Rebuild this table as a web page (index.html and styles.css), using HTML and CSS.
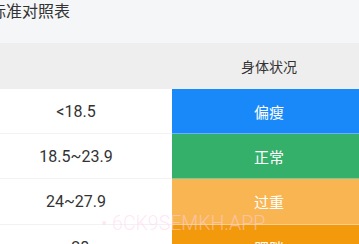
FILE: index.html
```html
<!DOCTYPE html>
<html lang="zh">
<head>
<meta charset="utf-8">
<link rel="stylesheet" href="styles.css">
</head>
<body>
<div class="page">
  <h1 class="title">标准对照表</h1>
  <div class="table">
    <div class="cell head"></div>
    <div class="cell head">身体状况</div>
    <div class="cell val">&lt;18.5</div>
    <div class="cell tag blue">偏瘦</div>
    <div class="cell val">18.5~23.9</div>
    <div class="cell tag green">正常</div>
    <div class="cell val">24~27.9</div>
    <div class="cell tag orange">过重</div>
    <div class="cell val">≥28</div>
    <div class="cell tag dark">肥胖</div>
  </div>
  <div class="watermark">• 6CK9SEMKH.APP</div>
</div>
</body>
</html>
```
FILE: styles.css
```css
html, body {
  margin: 0;
  padding: 0;
  background: #f5f6f8;
  overflow: hidden;
}
.page {
  position: relative;
  width: 359px;
  height: 244px;
  overflow: hidden;
  font-family: Roboto, "Noto Sans CJK SC", sans-serif;
}
.title {
  margin: 0 0 0 -10px;
  height: 43px;
  font-size: 16px;
  font-weight: 400;
  line-height: 21px;
  color: #333;
  font-family: "Noto Sans CJK SC", sans-serif;
}
.table {
  display: grid;
  grid-template-columns: 192px 194px;
  grid-template-rows: 46px 45px 45px 46px 45px;
  margin-left: -20px;
  width: 386px;
}
.cell {
  display: flex;
  align-items: center;
  justify-content: center;
  box-sizing: border-box;
}
.head {
  background: #eeeeee;
  font-size: 14px;
  color: #333;
  font-family: "Noto Sans CJK SC", sans-serif;
}
.val {
  background: #fff;
  border-bottom: 1px solid #f2f2f2;
  font-size: 16px;
  color: #333;
}
.tag {
  color: #fff;
  font-size: 15px;
  font-family: "Noto Sans CJK SC", sans-serif;
  border-bottom: 1px solid rgba(255,255,255,0.35);
}
.blue { background: #1989fa; }
.green { background: #35b06a; }
.orange { background: #f9b552; }
.dark { background: #f39a0c; }
.watermark {
  position: absolute;
  left: 101px;
  top: 212px;
  font-size: 19.5px;
  font-weight: 300;
  line-height: 24px;
  color: rgba(255, 210, 236, 0.55);
  font-family: Roboto, sans-serif;
  white-space: nowrap;
}
```
